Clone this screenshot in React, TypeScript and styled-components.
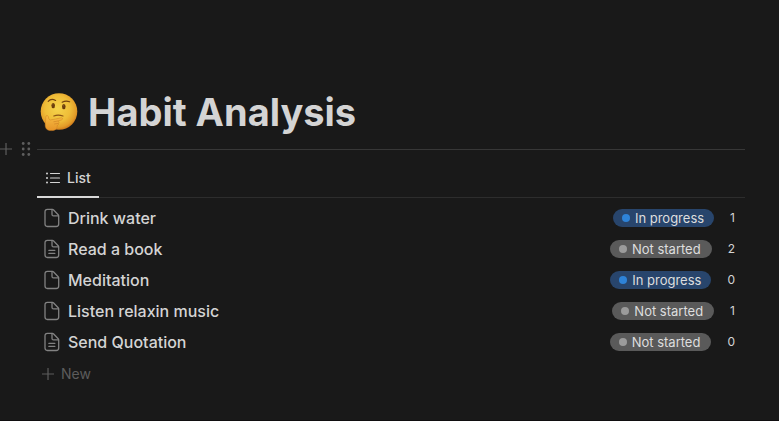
import React from "react";
import styled, { createGlobalStyle } from "styled-components";

const GlobalStyle = createGlobalStyle`
  *, *::before, *::after { box-sizing: border-box; }
  body {
    margin: 0;
    background: #191919;
    color: #d4d4d4;
    font-family: Inter, "Liberation Sans", sans-serif;
  }
  button {
    margin: 0;
    padding: 0;
    border: 0;
    background: none;
    color: inherit;
    font: inherit;
    cursor: pointer;
  }
  svg { display: block; flex: none; }
`;

const Page = styled.main`
  display: flex;
  flex-direction: column;
  min-height: 100vh;
  padding: 88px 34px 0 0;
  border-bottom: 1px solid #100e10;
`;

const Title = styled.h1`
  display: flex;
  align-items: center;
  gap: 9px;
  margin: 0 0 0 39px;
  height: 48px;
  font-size: 38px;
  line-height: 48px;
  font-weight: 700;
`;

const DividerBlock = styled.div`
  display: flex;
  align-items: center;
  height: 26px;
`;

const Gutter = styled.div`
  display: flex;
  flex: none;
  align-items: center;
  gap: 9px;
  width: 37px;
  color: #5e5e5e;
`;

const Divider = styled.hr`
  flex: 1;
  margin: 0;
  border: 0;
  border-top: 1px solid #373737;
`;

const ListView = styled.section`
  margin-left: 37px;
`;

const Tabs = styled.div`
  display: flex;
  height: 36px;
  border-bottom: 1px solid #2d2d2d;
`;

const Tab = styled.button`
  display: flex;
  align-items: center;
  gap: 6px;
  height: 36px;
  padding: 0 8px 2px;
  border-bottom: 2px solid #d8d8d8;
  font-size: 14px;
  line-height: 20px;
  font-weight: 500;
`;

const Rows = styled.ul`
  display: grid;
  gap: 1px;
  margin: 0;
  padding: 5px 0 0;
  list-style: none;
`;

const Row = styled.a`
  display: flex;
  align-items: center;
  height: 30px;
  padding: 0 10px 0 6px;
  color: inherit;
  text-decoration: none;
`;

const RowIcon = styled.span`
  flex: none;
  width: 25px;
  color: #828282;
`;

const RowName = styled.span`
  flex: 1;
  font-size: 16px;
  line-height: 24px;
  font-weight: 500;
`;

const Status = styled.span<{ $active: boolean }>`
  display: flex;
  align-items: center;
  gap: 5px;
  height: 18px;
  padding: 0 ${(p) => (p.$active ? 10 : 11)}px 0 9px;
  border-radius: 9px;
  background: ${(p) => (p.$active ? "#28456c" : "#5a5a5a")};
  color: #dedede;
  font-size: 13px;
  line-height: 18px;

  &::before {
    content: "";
    width: 8px;
    height: 8px;
    border-radius: 50%;
    background: ${(p) => (p.$active ? "#2e83d8" : "#9b9b9b")};
  }
`;

const Count = styled.span`
  margin-left: 16px;
  font-size: 12px;
  line-height: 18px;
`;

const NewButton = styled.button`
  display: flex;
  align-items: center;
  gap: 7px;
  height: 34px;
  padding: 0 5px;
  color: #5c5c5c;
  font-size: 14px;
  line-height: 20px;
`;

const ThinkingFace = () => (
  <svg width="40" height="40" viewBox="0 0 40 40" role="img" aria-label="Thinking face">
    <defs>
      <radialGradient id="face" cx="0.46" cy="0.42" r="0.58">
        <stop offset="0" stopColor="#f5d34b" />
        <stop offset="0.6" stopColor="#efbd38" />
        <stop offset="0.88" stopColor="#e39d29" />
        <stop offset="1" stopColor="#d07d1c" />
      </radialGradient>
      <linearGradient id="hand" x1="0" y1="0" x2="0" y2="1">
        <stop offset="0" stopColor="#f7bd43" />
        <stop offset="1" stopColor="#e69428" />
      </linearGradient>
    </defs>
    <circle cx="20" cy="19.5" r="18.3" fill="url(#face)" />
    <path d="M9.2 9.4 Q12.2 5.8 16.6 8.4" fill="none" stroke="#74430f" strokeWidth="1.2" strokeLinecap="round" />
    <path d="M23.2 10.2 Q26.8 8.4 30.6 9.8" fill="none" stroke="#74430f" strokeWidth="1.2" strokeLinecap="round" />
    <ellipse cx="14.2" cy="13.6" rx="1.8" ry="2.7" fill="#6b3d0d" />
    <ellipse cx="24.8" cy="14.6" rx="1.8" ry="2.7" fill="#6b3d0d" />
    <circle cx="13.9" cy="12.7" r="0.5" fill="#94642a" />
    <circle cx="24.5" cy="13.7" r="0.5" fill="#94642a" />
    <path d="M14.8 24 Q19 22.4 24 24" fill="none" stroke="#8b5415" strokeWidth="1.2" strokeLinecap="round" />
    <path
      d="M6.8 25.2 C6.5 23.2 9 22.9 9.3 24.8 C9.6 26.4 10.1 27.8 11.2 28 C14.5 27.4 18.5 26.7 21.6 25.9 C23.8 25.4 24.3 27.4 22.3 28 L18.8 29 C20.4 29.4 20.6 30.7 19.4 31.3 C19.8 32.3 19.2 33.2 18.2 33.5 C18.2 36.6 16.6 38.6 12.6 38.6 C8.4 38.7 6.2 36.8 6.2 32.7 C6.2 30 7 27.6 6.8 25.2 Z"
      fill="url(#hand)"
      stroke="#cf7f22"
      strokeWidth="0.5"
    />
    <path d="M14.4 29.8 L18.8 29 M15.2 32 L19.2 31.4" stroke="#cd8025" strokeWidth="0.6" fill="none" />
  </svg>
);

const PlusIcon = ({ size = 12 }: { size?: number }) => (
  <svg width={size} height="14" viewBox={`${12 - size} 0 ${size} 14`} aria-hidden="true">
    <path d="M0 7h12M6 1v12" stroke="currentColor" strokeWidth="1.2" fill="none" />
  </svg>
);

const GripIcon = () => (
  <svg width="10" height="16" viewBox="0 0 10 16" fill="currentColor" aria-hidden="true">
    {[2.5, 8, 13.5].map((y) => (
      <g key={y}>
        <circle cx="2.2" cy={y} r="1.4" />
        <circle cx="7.8" cy={y} r="1.4" />
      </g>
    ))}
  </svg>
);

const ListIcon = () => (
  <svg width="16" height="14" viewBox="0 0 16 14" aria-hidden="true">
    <g fill="currentColor">
      <circle cx="2" cy="2.5" r="1" />
      <circle cx="2" cy="7" r="1" />
      <circle cx="2" cy="11.5" r="1" />
    </g>
    <path d="M5.5 2.5H14.5M5.5 7H14.5M5.5 11.5H14.5" stroke="currentColor" strokeWidth="1.2" strokeLinecap="round" />
  </svg>
);

const PageIcon = ({ filled }: { filled: boolean }) => (
  <svg width="18" height="20" viewBox="0 0 18 20" fill="none" stroke="currentColor" strokeWidth="1.3" strokeLinejoin="round" strokeLinecap="round" aria-hidden="true">
    <path d="M4.4 1.3H9.2Q9.9 1.3 10.4 1.8L15.2 6.8Q15.7 7.3 15.7 8V16Q15.7 18.5 13.2 18.5H4.4Q2 18.5 2 16V3.8Q2 1.3 4.4 1.3Z" />
    <path d="M9 1.5V6.4Q9 7.9 10.5 7.9H15.5" />
    {filled && <path d="M5.9 11.4H11.8M5.9 14.4H11.8" />}
  </svg>
);

type Habit = { name: string; active: boolean; notes: boolean; count: number };

const habits: Habit[] = [
  { name: "Drink water", active: true, notes: false, count: 1 },
  { name: "Read a book", active: false, notes: true, count: 2 },
  { name: "Meditation", active: true, notes: false, count: 0 },
  { name: "Listen relaxin music", active: false, notes: false, count: 1 },
  { name: "Send Quotation", active: false, notes: true, count: 0 },
];

export default function App() {
  return (
    <>
      <GlobalStyle />
      <Page>
        <Title>
          <ThinkingFace />
          Habit Analysis
        </Title>
        <DividerBlock>
          <Gutter>
            <button type="button" aria-label="Add block">
              <PlusIcon />
            </button>
            <button type="button" aria-label="Drag block">
              <GripIcon />
            </button>
          </Gutter>
          <Divider />
        </DividerBlock>
        <ListView>
          <Tabs role="tablist">
            <Tab type="button" role="tab" aria-selected="true">
              <ListIcon />
              List
            </Tab>
          </Tabs>
          <Rows>
            {habits.map((habit) => (
              <li key={habit.name}>
                <Row href="#">
                  <RowIcon>
                    <PageIcon filled={habit.notes} />
                  </RowIcon>
                  <RowName>{habit.name}</RowName>
                  <Status $active={habit.active}>{habit.active ? "In progress" : "Not started"}</Status>
                  <Count>{habit.count}</Count>
                </Row>
              </li>
            ))}
          </Rows>
          <NewButton type="button">
            <PlusIcon />
            New
          </NewButton>
        </ListView>
      </Page>
    </>
  );
}
